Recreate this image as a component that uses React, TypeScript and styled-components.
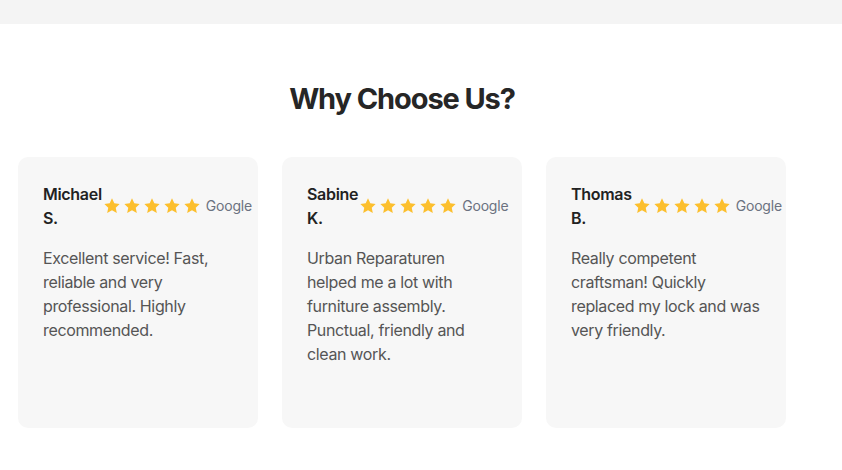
import React from "react";
import styled, { createGlobalStyle } from "styled-components";

const GlobalStyle = createGlobalStyle`
  * { box-sizing: border-box; }
  html, body { margin: 0; padding: 0; background: #ffffff; }
  body { font-family: Inter, "Noto Sans", "Liberation Sans", sans-serif; -webkit-font-smoothing: antialiased; }
`;

const TopBar = styled.div`
  height: 24px;
  background: #f4f4f4;
`;

const Section = styled.section`
  width: 768px;
  margin-left: 18px;
  padding-top: 57px;
`;

const Heading = styled.h2`
  margin: 0 0 40px;
  text-align: center;
  font-size: 29px;
  line-height: 36px;
  font-weight: 700;
  letter-spacing: -1.1px;
  color: #262626;
`;

const Grid = styled.div`
  display: grid;
  grid-template-columns: repeat(3, 240px);
  gap: 24px;
`;

const Card = styled.article`
  background: #f7f7f7;
  border-radius: 10px;
  padding: 25px;
  min-height: 271px;
`;

const Header = styled.div`
  display: flex;
  align-items: center;
  gap: 1px;
  width: 190px;
`;

const Name = styled.div`
  flex: 1 1 auto;
  min-width: min-content;
  font-size: 16px;
  line-height: 24px;
  font-weight: 600;
  letter-spacing: -0.3px;
  color: #222222;
`;

const Rating = styled.div`
  display: flex;
  align-items: center;
  flex-shrink: 0;
  gap: 5px;
`;

const Stars = styled.div`
  display: flex;
  gap: 2px;
`;

const Source = styled.span`
  font-size: 14px;
  line-height: 20px;
  letter-spacing: -0.2px;
  color: #6b7280;
`;

const Text = styled.p`
  margin: 16px 0 0;
  font-size: 16px;
  line-height: 24px;
  letter-spacing: -0.35px;
  color: #555555;
`;

const Star = () => (
  <svg width="18" height="18" viewBox="0 0 24 24">
    <path
      fill="#fcbf2d"
      d="M12 1.8l3.1 6.6 7.1.9-5.2 4.9 1.4 7.1L12 17.8l-6.4 3.5 1.4-7.1-5.2-4.9 7.1-.9z"
    />
  </svg>
);

const reviews = [
  { name: "Michael S.", text: "Excellent service! Fast, reliable and very professional. Highly recommended." },
  { name: "Sabine K.", text: "Urban Reparaturen helped me a lot with furniture assembly. Punctual, friendly and clean work." },
  { name: "Thomas B.", text: "Really competent craftsman! Quickly replaced my lock and was very friendly." },
];

export default function App() {
  return (
    <>
      <GlobalStyle />
      <TopBar />
      <Section>
        <Heading>Why Choose Us?</Heading>
        <Grid>
          {reviews.map((r) => (
            <Card key={r.name}>
              <Header>
                <Name>{r.name}</Name>
                <Rating>
                  <Stars>
                    {[0, 1, 2, 3, 4].map((i) => (
                      <Star key={i} />
                    ))}
                  </Stars>
                  <Source>Google</Source>
                </Rating>
              </Header>
              <Text>{r.text}</Text>
            </Card>
          ))}
        </Grid>
      </Section>
    </>
  );
}
